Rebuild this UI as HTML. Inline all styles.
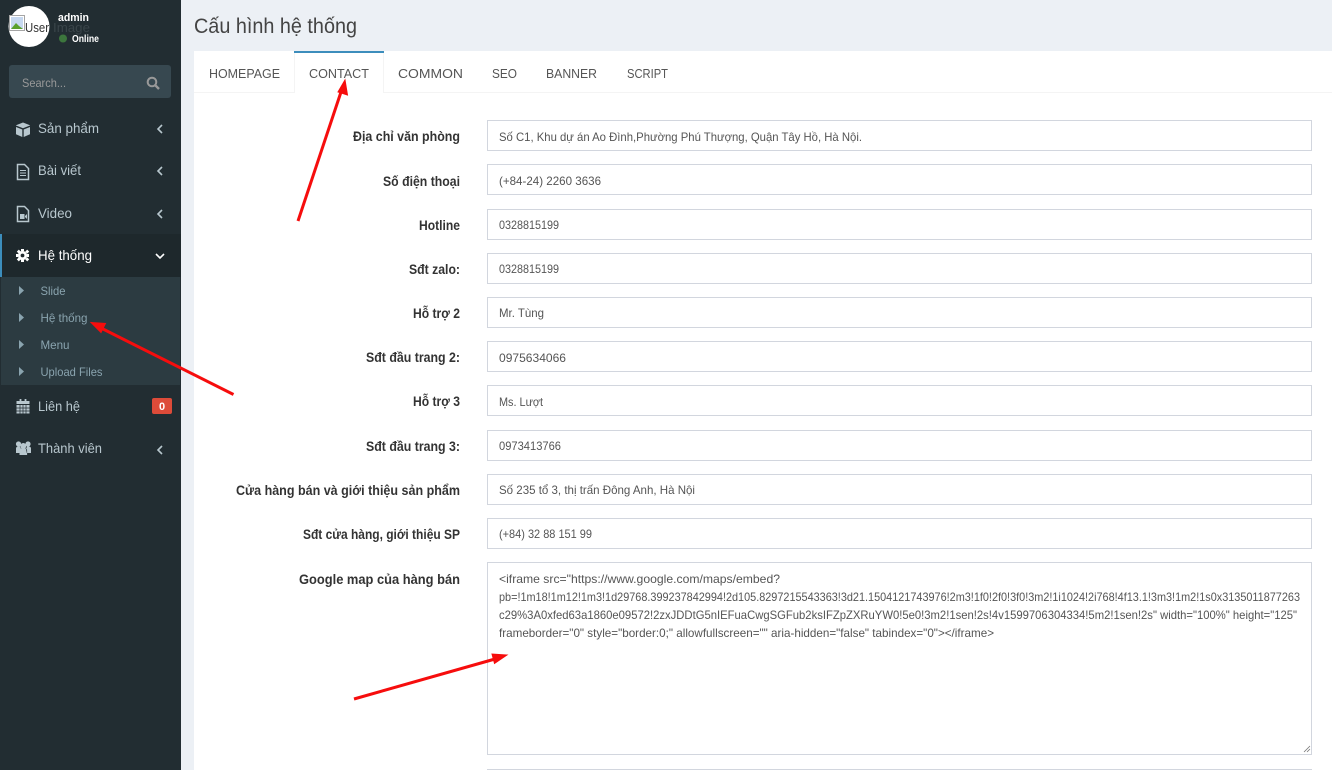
<!DOCTYPE html>
<html lang="vi">
<head>
<meta charset="utf-8">
<title>Cấu hình hệ thống</title>
<style>
html,body{margin:0;padding:0;width:1332px;height:770px;overflow:hidden;background:#ecf0f5}
svg{display:block;position:absolute;left:0;top:0}
text{font-family:"Liberation Sans","DejaVu Sans",sans-serif}
.lb{font-size:14px;font-weight:700;fill:#333;text-anchor:end}
.in{font-size:12px;fill:#555}
.tb{font-size:13px;fill:#555}
.nv{font-size:14px;fill:#b8c7ce}
.sb{font-size:12px;fill:#8aa4af}
.box{fill:#fff;stroke:#d2d6de;stroke-width:1}
.ch{fill:none;stroke:#b8c7ce;stroke-width:1.6}
.tri{fill:#8aa4af}
.ic{fill:#b8c7ce}
</style>
</head>
<body>
<svg width="1332" height="770" viewBox="0 0 1332 770" xmlns="http://www.w3.org/2000/svg">
<rect width="1332" height="770" fill="#ecf0f5"/>
<!-- sidebar -->
<rect width="181" height="770" fill="#222d32"/>
<circle cx="29" cy="26.500" r="20.500" fill="#fff"/>
<rect x="9.500" y="15.500" width="15" height="15" fill="#fff" stroke="#a5a5a5"/>
<rect x="11" y="17" width="12" height="12" fill="#c6d8f0"/>
<path d="M11 29l5-6 3 3 4 3z" fill="#5aa02c"/>
<text x="25" y="32" font-size="13" fill="#333" textLength="24" lengthAdjust="spacingAndGlyphs">User</text>
<text x="53" y="32" font-size="13" fill="#3a454a" textLength="37" lengthAdjust="spacingAndGlyphs">Image</text>
<text x="58" y="21" font-size="11px" font-weight="700" fill="#fff" textLength="31" lengthAdjust="spacingAndGlyphs">admin</text>
<circle cx="63" cy="38.500" r="4" fill="#3c763d"/>
<text x="72" y="42" font-size="10.500" font-weight="700" fill="#fff" textLength="27" lengthAdjust="spacingAndGlyphs">Online</text>

<rect x="9" y="65" width="162" height="33" rx="3" fill="#374850"/>
<text x="22" y="87" font-size="12px" fill="#999" textLength="44" lengthAdjust="spacingAndGlyphs">Search...</text>
<circle cx="152" cy="82" r="4.300" fill="none" stroke="#999" stroke-width="2"/>
<path d="M155.200 85.200l3.800 3.800" stroke="#999" stroke-width="2.400" fill="none"/>

<!-- cube -->
<path class="ic" d="M23 122.500l7 2.800v.2l-7 2.700-7-2.700v-.2zM16 127l6.300 2.500v7.500l-6.300-2.800zM30 127v7.200l-6.300 2.800v-7.500z"/>
<text class="nv" x="38" y="133" textLength="61" lengthAdjust="spacingAndGlyphs">Sản phẩm</text>
<path class="ch" d="M162 125l-4 4 4 4"/>
<!-- file-text -->
<path d="M17.500 164.500h7l4 4v11h-11z" fill="none" stroke="#b8c7ce" stroke-width="1.500"/>
<path d="M20 170.500h6M20 173h6M20 175.500h6" stroke="#b8c7ce" stroke-width="1"/>
<text class="nv" x="38" y="175" textLength="43" lengthAdjust="spacingAndGlyphs">Bài viết</text>
<path class="ch" d="M162 167l-4 4 4 4"/>
<!-- file-video -->
<path d="M17.500 206.500h7l4 4v11h-11z" fill="none" stroke="#b8c7ce" stroke-width="1.500"/>
<path class="ic" d="M20 214h4.500v5H20zM25 216l2-2v5l-2-2z"/>
<text class="nv" x="38" y="218" textLength="34" lengthAdjust="spacingAndGlyphs">Video</text>
<path class="ch" d="M162 210l-4 4 4 4"/>

<!-- active -->
<rect x="0" y="234" width="181" height="43" fill="#1e282c"/>
<rect x="0" y="234" width="2" height="43" fill="#3c8dbc"/>
<g fill="#fff">
<circle cx="22.500" cy="255.500" r="4.600"/>
<path d="M21 249h3v2h-3zM21 260h3v2h-3zM16 254h2v3h-2zM27 254h2v3h-2z"/>
<path d="M17.300 251.300l2-2 2 2-2 2zM25.700 251.300l2-2 2 2-2 2z" transform="translate(-.5 .3)"/>
<path d="M17.300 259.700l2-2 2 2-2 2zM25.700 259.700l2-2 2 2-2 2z" transform="translate(-.5 -.3)"/>
</g>
<circle cx="22.500" cy="255.500" r="1.900" fill="#1e282c"/>
<text x="38" y="260" font-size="14px" fill="#fff" textLength="54" lengthAdjust="spacingAndGlyphs">Hệ thống</text>
<path d="M156 254l4 4 4-4" fill="none" stroke="#fff" stroke-width="1.600"/>

<rect x="1" y="277" width="179" height="108" fill="#2c3b41"/>
<path class="tri" d="M19 286l5 4.500-5 4.500z"/>
<text class="sb" x="40.500" y="295" textLength="25" lengthAdjust="spacingAndGlyphs">Slide</text>
<path class="tri" d="M19 313l5 4.500-5 4.500z"/>
<text class="sb" x="40.500" y="322" textLength="47" lengthAdjust="spacingAndGlyphs">Hệ thống</text>
<path class="tri" d="M19 340l5 4.500-5 4.500z"/>
<text class="sb" x="40.500" y="349" textLength="29" lengthAdjust="spacingAndGlyphs">Menu</text>
<path class="tri" d="M19 367l5 4.500-5 4.500z"/>
<text class="sb" x="40.500" y="376" textLength="62" lengthAdjust="spacingAndGlyphs">Upload Files</text>

<!-- calendar -->
<path d="M16.500 401h13v3h-13zM16.500 405h13v8.500h-13z" fill="#b8c7ce"/>
<path d="M20.500 399v4M25.500 399v4" stroke="#b8c7ce" stroke-width="1.800"/>
<path d="M16.500 408h13M16.500 411h13M20 405v9M23 405v9M26 405v9" stroke="#222d32" stroke-width=".7"/>
<text class="nv" x="38" y="411" textLength="42" lengthAdjust="spacingAndGlyphs">Liên hệ</text>
<rect x="152" y="398" width="20" height="16" rx="2" fill="#dd4b39"/>
<text x="162" y="410" font-size="11px" font-weight="700" fill="#fff" text-anchor="middle">0</text>
<!-- users -->
<g class="ic">
<circle cx="18.500" cy="444" r="2.600"/><circle cx="28" cy="444" r="2.600"/><circle cx="23.300" cy="446" r="3"/>
<path d="M16 453v-4.500q0-2 2.500-2h1.500l1 2.500-.8 4zM31 453v-4.500q0-2-2.500-2H27l-1 2.500.8 4zM19.500 455v-4q0-2.500 2-2.500h3.600q2 0 2 2.500v4z"/>
</g>
<text class="nv" x="38" y="453" textLength="64" lengthAdjust="spacingAndGlyphs">Thành viên</text>
<path class="ch" d="M162 446l-4 4 4 4"/>

<!-- header -->
<text x="194" y="33" font-size="21px" fill="#444" textLength="163" lengthAdjust="spacingAndGlyphs">Cấu hình hệ thống</text>

<!-- main box -->
<rect x="194" y="51" width="1138" height="719" fill="#fff"/>
<rect x="194" y="92" width="1138" height="1" fill="#f4f4f4"/>
<rect x="294" y="51" width="90" height="42" fill="#fff"/>
<path d="M294.500 53v40M383.500 53v40" stroke="#f4f4f4"/>
<rect x="294" y="51" width="90" height="2" fill="#3c8dbc"/>
<text class="tb" x="209" y="78" textLength="71" lengthAdjust="spacingAndGlyphs">HOMEPAGE</text>
<text class="tb" x="309" y="78" textLength="60" lengthAdjust="spacingAndGlyphs">CONTACT</text>
<text class="tb" x="398" y="78" textLength="65" lengthAdjust="spacingAndGlyphs">COMMON</text>
<text class="tb" x="492" y="78" textLength="25" lengthAdjust="spacingAndGlyphs">SEO</text>
<text class="tb" x="546" y="78" textLength="51" lengthAdjust="spacingAndGlyphs">BANNER</text>
<text class="tb" x="627" y="78" textLength="41" lengthAdjust="spacingAndGlyphs">SCRIPT</text>

<!-- form -->
<rect class="box" x="487.500" y="120.500" width="824" height="30"/>
<rect class="box" x="487.500" y="164.500" width="824" height="30"/>
<rect class="box" x="487.500" y="209.500" width="824" height="30"/>
<rect class="box" x="487.500" y="253.500" width="824" height="30"/>
<rect class="box" x="487.500" y="297.500" width="824" height="30"/>
<rect class="box" x="487.500" y="341.500" width="824" height="30"/>
<rect class="box" x="487.500" y="385.500" width="824" height="30"/>
<rect class="box" x="487.500" y="430.500" width="824" height="30"/>
<rect class="box" x="487.500" y="474.500" width="824" height="30"/>
<rect class="box" x="487.500" y="518.500" width="824" height="30"/>
<rect class="box" x="487.500" y="562.500" width="824" height="192"/>
<rect x="487" y="769" width="825" height="1" fill="#d2d6de"/>
<path d="M1304 752l6-6M1307 752l3-3" stroke="#777" stroke-width=".8"/>

<text class="lb" x="460" y="141" textLength="107" lengthAdjust="spacingAndGlyphs">Địa chỉ văn phòng</text>
<text class="lb" x="460" y="186" textLength="77" lengthAdjust="spacingAndGlyphs">Số điện thoại</text>
<text class="lb" x="460" y="230" textLength="41" lengthAdjust="spacingAndGlyphs">Hotline</text>
<text class="lb" x="460" y="274" textLength="51" lengthAdjust="spacingAndGlyphs">Sđt zalo:</text>
<text class="lb" x="460" y="318" textLength="47" lengthAdjust="spacingAndGlyphs">Hỗ trợ 2</text>
<text class="lb" x="460" y="362" textLength="94" lengthAdjust="spacingAndGlyphs">Sđt đầu trang 2:</text>
<text class="lb" x="460" y="406" textLength="47" lengthAdjust="spacingAndGlyphs">Hỗ trợ 3</text>
<text class="lb" x="460" y="451" textLength="94" lengthAdjust="spacingAndGlyphs">Sđt đầu trang 3:</text>
<text class="lb" x="460" y="495" textLength="224" lengthAdjust="spacingAndGlyphs">Cửa hàng bán và giới thiệu sản phẩm</text>
<text class="lb" x="460" y="539" textLength="157" lengthAdjust="spacingAndGlyphs">Sđt cửa hàng, giới thiệu SP</text>
<text class="lb" x="460" y="584" textLength="161" lengthAdjust="spacingAndGlyphs">Google map của hàng bán</text>

<text class="in" x="499" y="141" textLength="363" lengthAdjust="spacingAndGlyphs">Số C1, Khu dự án Ao Đình,Phường Phú Thượng, Quận Tây Hồ,  Hà Nội.</text>
<text class="in" x="499" y="185" textLength="102" lengthAdjust="spacingAndGlyphs">(+84-24) 2260 3636</text>
<text class="in" x="499" y="229" textLength="60" lengthAdjust="spacingAndGlyphs">0328815199</text>
<text class="in" x="499" y="273" textLength="60" lengthAdjust="spacingAndGlyphs">0328815199</text>
<text class="in" x="499" y="317" textLength="45" lengthAdjust="spacingAndGlyphs">Mr. Tùng</text>
<text class="in" x="499" y="362" textLength="67" lengthAdjust="spacingAndGlyphs">0975634066</text>
<text class="in" x="499" y="406" textLength="44" lengthAdjust="spacingAndGlyphs">Ms. Lượt</text>
<text class="in" x="499" y="450" textLength="62" lengthAdjust="spacingAndGlyphs">0973413766</text>
<text class="in" x="499" y="494" textLength="196" lengthAdjust="spacingAndGlyphs">Số 235 tổ 3, thị trấn Đông Anh, Hà Nội</text>
<text class="in" x="499" y="538" textLength="93" lengthAdjust="spacingAndGlyphs">(+84) 32 88 151 99</text>

<text class="in" x="499" y="583" textLength="281" lengthAdjust="spacingAndGlyphs">&lt;iframe src="https://www.google.com/maps/embed?</text>
<text class="in" x="499" y="601" textLength="801" lengthAdjust="spacingAndGlyphs">pb=!1m18!1m12!1m3!1d29768.399237842994!2d105.8297215543363!3d21.1504121743976!2m3!1f0!2f0!3f0!3m2!1i1024!2i768!4f13.1!3m3!1m2!1s0x3135011877263</text>
<text class="in" x="499" y="619" textLength="798" lengthAdjust="spacingAndGlyphs">c29%3A0xfed63a1860e09572!2zxJDDtG5nIEFuaCwgSGFub2ksIFZpZXRuYW0!5e0!3m2!1sen!2s!4v1599706304334!5m2!1sen!2s" width="100%" height="125"</text>
<text class="in" x="499" y="637" textLength="495" lengthAdjust="spacingAndGlyphs">frameborder="0" style="border:0;" allowfullscreen="" aria-hidden="false" tabindex="0"&gt;&lt;/iframe&gt;</text>

<!-- arrows -->
<g stroke="#f60d0d" stroke-width="3" fill="#f60d0d">
<path d="M298 221L341 92" fill="none"/>
<path d="M345 80l2.500 15-9.500-3z" stroke-width="1"/>
<path d="M233.500 394.500L101 328" fill="none"/>
<path d="M91 322.500l14.500 1-4.500 9z" stroke-width="1"/>
<path d="M354 699L495 659" fill="none"/>
<path d="M507 655l-12.500 8.500-2.500-9.500z" stroke-width="1"/>
</g>
</svg>
</body>
</html>
